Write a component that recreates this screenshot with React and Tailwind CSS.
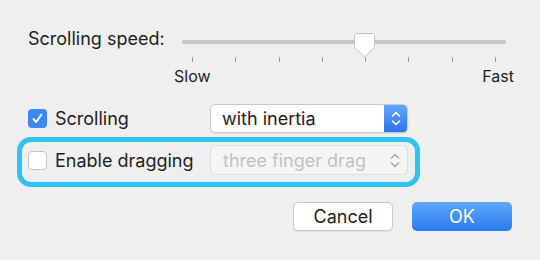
import React from 'react';

const font = { fontFamily: 'Inter, "Liberation Sans", sans-serif' };

const Chevrons = ({ color }) => (
    <svg width="10" height="17" viewBox="0 0 10 17" fill="none" stroke={color} strokeWidth="1.6" strokeLinecap="round" strokeLinejoin="round">
        <path d="M1.5 6 L5 2.5 L8.5 6" />
        <path d="M1.5 11 L5 14.5 L8.5 11" />
    </svg>
);

const Checkbox = ({ checked }) =>
    checked ? (
        <div className="w-[19px] h-[19px] rounded-[4px] bg-[#3b87f5] flex items-center justify-center">
            <svg width="13" height="13" viewBox="0 0 13 13" fill="none" stroke="white" strokeWidth="2" strokeLinecap="round" strokeLinejoin="round">
                <path d="M2.5 7 L5.2 10 L10.5 2.5" />
            </svg>
        </div>
    ) : (
        <div className="w-[19px] h-[19px] rounded-[4px] bg-white border border-[#c4c4c4]" />
    );

const ticks = [0, 1, 2, 3, 4, 5, 6, 7];

export default function App() {
    return (
        <div className="w-[540px] h-[260px] bg-[#efefef] text-[#1e1e1e] overflow-hidden" style={font}>
            {/* Scrolling speed slider */}
            <div className="flex items-start pl-[28px] pt-[28px]">
                <div className="w-[154px] text-[18px] leading-[22px]">Scrolling speed:</div>
                <div className="w-[324px] pt-[12px]">
                    <div className="relative h-[4px] rounded-full bg-[#c7c7c7]">
                        <svg className="absolute left-[172px] top-[-7px]" width="21" height="25" viewBox="0 0 21 25">
                            <path d="M3 0.5 H18 Q20.5 0.5 20.5 3 V14 L10.5 24 L0.5 14 V3 Q0.5 0.5 3 0.5 Z" fill="white" stroke="#c2c2c2" strokeWidth="1" />
                        </svg>
                    </div>
                    <div className="flex justify-between px-[10px] mt-[13px]">
                        {ticks.map((t) => (
                            <div key={t} className="w-[1px] h-[5px] bg-[#9a9a9a]" />
                        ))}
                    </div>
                    <div className="flex justify-between text-[16px] leading-[20px] mt-[4px] -mx-[8px]">
                        <span>Slow</span>
                        <span>Fast</span>
                    </div>
                </div>
            </div>

            {/* Scrolling row */}
            <div className="flex items-center pl-[28px] mt-[18px] h-[29px]">
                <div className="w-[182px] flex items-center gap-[8px]">
                    <Checkbox checked />
                    <span className="text-[18px]">Scrolling</span>
                </div>
                <div className="w-[198px] h-[29px] flex rounded-[5px] bg-white border border-[#c9c9c9] shadow-[0_1px_1px_rgba(0,0,0,0.08)] overflow-hidden">
                    <div className="flex-1 flex items-center pl-[11px] text-[18px]">with inertia</div>
                    <div className="w-[23px] flex items-center justify-center bg-gradient-to-b from-[#62a6fa] to-[#2c72ee]">
                        <Chevrons color="white" />
                    </div>
                </div>
            </div>

            {/* Highlighted dragging row */}
            <div className="pl-[17px] mt-[4px]">
                <div className="w-[403px] h-[50px] border-[5px] border-[#2ec3f1] rounded-[14px] flex items-start pt-[3px] pl-[6px]">
                    <div className="w-[182px] h-[30px] flex items-center gap-[8px]">
                        <Checkbox />
                        <span className="text-[18px]">Enable dragging</span>
                    </div>
                    <div className="w-[198px] h-[30px] flex items-center justify-between rounded-[5px] bg-[#f5f5f5] border border-[#dedede] pl-[12px] pr-[7px]">
                        <span className="text-[18px] text-[#c2c2c2]">three finger drag</span>
                        <Chevrons color="#a8a8a8" />
                    </div>
                </div>
            </div>

            {/* Buttons */}
            <div className="flex justify-end gap-[19px] pr-[28px] mt-[15px]">
                <button className="w-[100px] h-[29px] rounded-[5px] bg-white border border-[#c8c8c8] shadow-[0_1px_1px_rgba(0,0,0,0.08)] text-[18px] text-[#1e1e1e]">
                    Cancel
                </button>
                <button className="w-[100px] h-[29px] rounded-[5px] bg-gradient-to-b from-[#5fa7fb] to-[#2a79f1] text-[18px] text-white">
                    OK
                </button>
            </div>
        </div>
    );
}
